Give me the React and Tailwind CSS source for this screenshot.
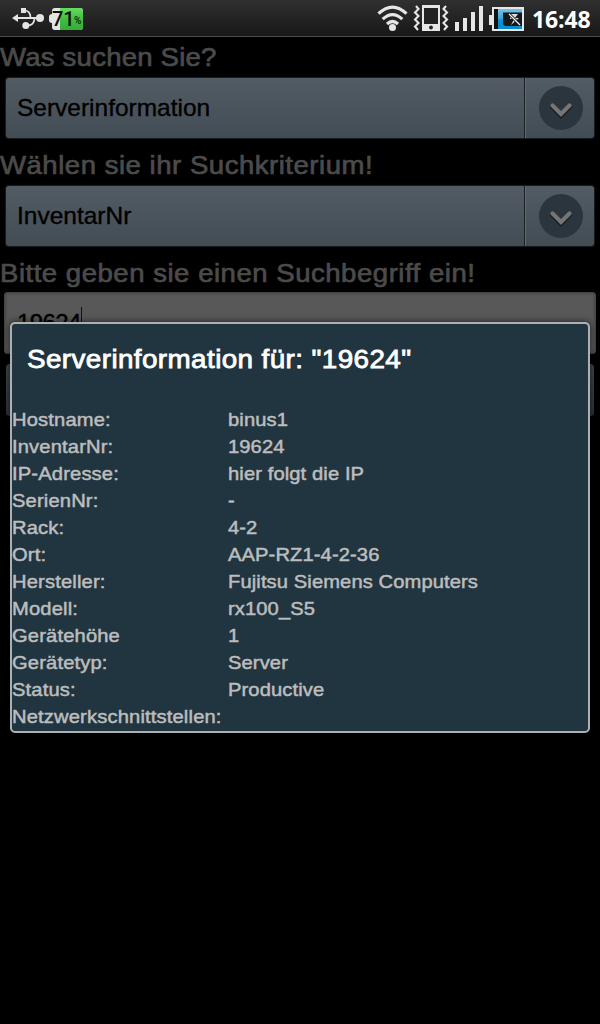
const ROWS = [
  ["Hostname:", "binus1"],
  ["InventarNr:", "19624"],
  ["IP-Adresse:", "hier folgt die IP"],
  ["SerienNr:", "-"],
  ["Rack:", "4-2"],
  ["Ort:", "AAP-RZ1-4-2-36"],
  ["Hersteller:", "Fujitsu Siemens Computers"],
  ["Modell:", "rx100_S5"],
  ["Gerätehöhe", "1"],
  ["Gerätetyp:", "Server"],
  ["Status:", "Productive"],
  ["Netzwerkschnittstellen:", ""],
];

function UsbIcon() {
  return (
    <svg width="34" height="24" viewBox="0 0 34 24" fill="none" stroke="#e4e4e4" strokeWidth="1.7">
      <path d="M5 12H30" strokeWidth="2" />
      <path d="M1 12L7 8V16Z" fill="#e4e4e4" stroke="none" />
      <rect x="10" y="2" width="5" height="5" fill="#e4e4e4" stroke="none" />
      <path d="M14 4.500Q19.500 5 19.500 12" />
      <path d="M15 19.500Q23.500 20 23.500 12" />
      <circle cx="14.800" cy="19.500" r="3.500" fill="#e4e4e4" stroke="none" />
      <circle cx="29" cy="12" r="4" fill="#e4e4e4" stroke="none" />
    </svg>
  );
}

function PercentBattery() {
  return (
    <div className="relative ml-[4px] h-6 w-[36px]">
      <svg className="absolute inset-0" width="36" height="24" viewBox="0 0 36 24">
        <defs>
          <linearGradient id="green" x2="0" y2="1">
            <stop stopColor="#64dc61" />
            <stop offset="0.5" stopColor="#43bd42" />
            <stop offset="1" stopColor="#32ac32" />
          </linearGradient>
        </defs>
        <path d="M6 2H31Q34 2 34 5V21Q34 24 31 24H6Q3 24 3 21V17Q0 17 0 14V11Q0 8 3 8V5Q3 2 6 2Z" fill="#e4e4e4" />
        <path d="M11 2H31Q34 2 34 5V21Q34 24 31 24H11Z" fill="url(#green)" />
      </svg>
      <span className="absolute left-[3px] top-[2px] font-['Roboto',sans-serif] text-[20px] font-medium leading-[22px] text-[#071107]">71</span>
      <span className="absolute left-[25px] top-[8px] font-['Roboto',sans-serif] text-[10px] font-bold leading-[14px] text-[#123c12]">%</span>
    </div>
  );
}

function WifiIcon() {
  return (
    <svg width="32" height="28" viewBox="0 0 32 28" fill="none" stroke="#e6e6e6" strokeWidth="3.2">
      <path d="M1.500 9.700Q15.500 -3.500 29.500 9.700M5.700 15.200Q15.500 6 25.300 15.200M10 20Q15.500 15 21 20" />
      <circle cx="15.500" cy="23.500" r="3.500" fill="#e6e6e6" stroke="none" />
    </svg>
  );
}

function VibrateIcon() {
  return (
    <svg width="36" height="28" viewBox="0 0 36 28" fill="none" stroke="#e6e6e6">
      <path d="M9 1H27V27H9Z" fill="#e6e6e6" stroke="none" />
      <path d="M11 4H25V20H11Z" fill="#222" stroke="none" />
      <circle cx="18" cy="23.500" r="1.900" fill="#222" stroke="none" />
      <path d="M3 2L5.500 5L2 8.500L5.500 12L2 15.500L5.500 19L2 22.500L5 26M33 2L30.500 5L34 8.500L30.500 12L34 15.500L30.500 19L34 22.500L31 26" strokeWidth="2.1" />
    </svg>
  );
}

function SignalIcon() {
  return (
    <svg width="30" height="28" viewBox="0 0 30 28" fill="#e6e6e6">
      <path d="M1 19H5V28H1ZM9 15H13V28H9ZM17 9H21V28H17ZM25 3H29V28H25Z" />
    </svg>
  );
}

function ChargeBattery() {
  return (
    <svg width="38" height="26" viewBox="0 0 38 26">
      <defs>
        <linearGradient id="blue" x2="0" y2="1">
          <stop stopColor="#79c3e6" />
          <stop offset="0.500" stopColor="#31a5dc" />
          <stop offset="0.550" stopColor="#0b91d2" />
          <stop offset="1" stopColor="#078bcc" />
        </linearGradient>
      </defs>
      <path d="M4 1H36V25H4V19H1V9H4Z" fill="#e6e6e6" />
      <path d="M6 3H34V23H6Z" fill="#111" />
      <path d="M10 3H34V23H10Z" fill="url(#blue)" />
      <path d="M15 6.500H34V20H18Q15 20 15 17Z" fill="#15191b" />
      <path d="M23 8L22 13H26L23 19L31 12H27L30 8Z" fill="#d8d8d8" />
      <path d="M21 8L32 19" stroke="#15191b" strokeWidth="3" />
      <path d="M21 8L32 19" stroke="#f0f0f0" strokeWidth="1.200" />
    </svg>
  );
}

function StatusBar() {
  return (
    <header className="flex h-[37px] items-start border-b border-[#4b4b4b] bg-linear-to-b from-[#303030] to-[#181818] pl-[11px]">
      <div className="flex pt-[6px]">
        <UsbIcon />
        <PercentBattery />
      </div>
      <div className="ml-auto flex w-[223px] items-start pt-[4px]">
        <WifiIcon />
        <div className="ml-[4px]"><VibrateIcon /></div>
        <div className="ml-[5px] -mt-px"><SignalIcon /></div>
        <div className="ml-[4px] mt-[2px]"><ChargeBattery /></div>
        <span className="ml-[6px] mt-px font-['Open_Sans',sans-serif] text-[23px] font-bold leading-7 tracking-[-0.1px] text-white">16:48</span>
      </div>
    </header>
  );
}

function Label({ tracking = "tracking-[0.48px]", children }) {
  return (
    <div className="h-[41px] whitespace-nowrap text-[26px] leading-[41px] text-[#4b4b4b] [-webkit-text-stroke:0.7px_#4b4b4b]">
      <span className={`inline-block origin-left scale-x-[1.06] ${tracking}`}>{children}</span>
    </div>
  );
}

function Spinner({ children }) {
  return (
    <div className="mx-[6px] mb-[7px] flex h-[60px] rounded-[3px] bg-linear-to-b from-[#535c63] to-[#424c55] shadow-[0_0_1px_1px_#1a1e21]">
      <div className="flex-1 pl-[11px] text-[24px] leading-[60px] text-black [-webkit-text-stroke:0.35px_#000]">
        <span className="inline-block origin-left scale-x-[1.02]">{children}</span>
      </div>
      <div className="flex w-[70px] items-center justify-center border-l border-[#191e21] pl-[3px] shadow-[inset_1px_0_0_#646b70]">
        <svg width="46" height="46" viewBox="0 0 46 46" fill="none">
          <circle cx="23" cy="23" r="22" fill="#2b353e" />
          <path d="M14.500 22L23 30.500L31.500 22" stroke="#15191c" strokeWidth="4.500" strokeLinecap="round" />
          <path d="M14.500 20.500L23 29L31.500 20.500" stroke="#757575" strokeWidth="4.200" strokeLinecap="round" />
        </svg>
      </div>
    </div>
  );
}

function Dialog() {
  return (
    <section className="absolute left-[10px] top-[322px] h-[411px] w-[580px] rounded-[5px] border-2 border-[#adb0b1] bg-[#213541] shadow-[0_0_6px_1px_#00000080]">
      <h1 className="h-[82px] whitespace-nowrap pl-[15px] text-[26px] leading-[70px] text-white [-webkit-text-stroke:0.8px_#fff]">
        <span className="inline-block origin-left scale-x-[1.07] tracking-[0.38px]">Serverinformation für: "19624"</span>
      </h1>
      <dl className="grid auto-rows-[27px] grid-cols-[216px_1fr] whitespace-nowrap text-[19px] leading-[27px] text-[#bdbdbd] [-webkit-text-stroke:0.5px_#bdbdbd]">
        {ROWS.map(([name, value]) => (
          <div key={name} className="contents">
            <dt className="w-fit origin-left scale-x-[1.06] tracking-[0.15px]">{name}</dt>
            <dd className="w-fit origin-left scale-x-[1.06] tracking-[0.1px]">{value}</dd>
          </div>
        ))}
      </dl>
    </section>
  );
}

export default function App() {
  return (
    <div className="relative h-[1024px] w-[600px] overflow-hidden bg-black font-['Liberation_Sans',Arial,sans-serif]">
      <StatusBar />
      <main>
        <Label tracking="tracking-[0.2px]">Was suchen Sie?</Label>
        <Spinner>Serverinformation</Spinner>
        <Label>Wählen sie ihr Suchkriterium!</Label>
        <Spinner>InventarNr</Spinner>
        <Label>Bitte geben sie einen Suchbegriff ein!</Label>
        <div className="mx-[4px] -mt-[2px] flex h-[62px] rounded-[4px] bg-[#585858] pl-[13px] pt-[15px] shadow-[inset_0_0_3px_1px_#3b3b3b]">
          <span className="h-[30px] border-r border-[#111] pt-px text-[24px] leading-[30px] tracking-[-0.6px] text-black [-webkit-text-stroke:0.4px_#000]">19624</span>
        </div>
        <div className="mx-[6px] mt-[10px] h-[52px] rounded-[4px] bg-linear-to-b from-[#3d464c] to-[#2b343b]" />
      </main>
      <Dialog />
    </div>
  );
}
